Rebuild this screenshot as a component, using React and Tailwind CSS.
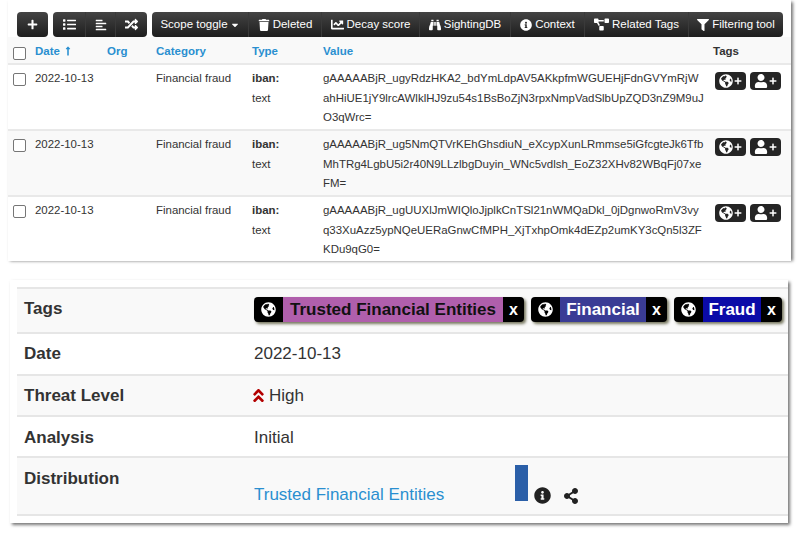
import {
  FaPlus, FaList, FaAlignLeft, FaRandom, FaCaretDown, FaTrash, FaChartLine, FaBinoculars,
  FaInfoCircle, FaProjectDiagram, FaFilter, FaGlobeAmericas, FaUser, FaAngleDoubleUp, FaShareAlt,
  FaLongArrowAltUp,
} from 'react-icons/fa';

const rows = [
  {
    bg: 'bg-white',
    lines: [
      'gAAAAABjR_ugyRdzHKA2_bdYmLdpAV5AKkpfmWGUEHjFdnGVYmRjW',
      'ahHiUE1jY9lrcAWlklHJ9zu54s1BsBoZjN3rpxNmpVadSlbUpZQD3nZ9M9uJ',
      'O3qWrc=',
    ],
  },
  {
    bg: 'bg-[#f9f9f9]',
    lines: [
      'gAAAAABjR_ug5NmQTVrKEhGhsdiuN_eXcypXunLRmmse5iGfcgteJk6Tfb',
      'MhTRg4LgbU5i2r40N9LLzlbgDuyin_WNc5vdlsh_EoZ32XHv82WBqFj07xe',
      'FM=',
    ],
  },
  {
    bg: 'bg-white',
    lines: [
      'gAAAAABjR_ugUUXlJmWIQloJjplkCnTSl21nWMQaDkl_0jDgnwoRmV3vy',
      'q33XuAzz5ypNQeUERaGnwCfMPH_XjTxhpOmk4dEZp2umKY3cQn5l3ZF',
      'KDu9qG0=',
    ],
  },
];

const toolbar = [
  { icon: <FaTrash size={12} />, label: 'Deleted', w: 'w-[73px]' },
  { icon: <FaChartLine size={13} />, label: 'Decay score', w: 'w-[98px]' },
  { icon: <FaBinoculars size={12} />, label: 'SightingDB', w: 'w-[91px]' },
  { icon: <FaInfoCircle size={12} />, label: 'Context', w: 'w-[74px]' },
  { icon: <FaProjectDiagram size={15} />, label: 'Related Tags', w: 'w-[104px]' },
  { icon: <FaFilter size={12} />, label: 'Filtering tool', w: 'flex-1' },
];

function Toolbar() {
  const groupCls = 'flex h-[25px] rounded-[4px] bg-gradient-to-b from-[#444444] to-[#1e1e1e] text-white';
  const btnCls = 'flex items-center justify-center border-l border-[#3a3a3a] first:border-l-0';
  return (
    <div className="flex gap-[5px] pl-[9px] pr-2 pt-3">
      <div className={`${groupCls} w-[31px] items-center justify-center`}>
        <FaPlus size={11} />
      </div>
      <div className={`${groupCls} w-[94px]`}>
        <div className={`${btnCls} w-[32px]`}><FaList size={13} /></div>
        <div className={`${btnCls} w-[30px]`}><FaAlignLeft size={12} /></div>
        <div className={`${btnCls} flex-1`}><FaRandom size={13} /></div>
      </div>
      <div className={`${groupCls} flex-1 text-[11.5px]`}>
        <div className={`${btnCls} w-[96px] gap-[2px]`}>
          Scope toggle
          <FaCaretDown size={10} />
        </div>
        {toolbar.map((b) => (
          <div key={b.label} className={`${btnCls} ${b.w} gap-[3px]`}>
            {b.icon}
            {b.label}
          </div>
        ))}
      </div>
    </div>
  );
}

function TagButton({ icon }) {
  return (
    <div className="flex h-[18px] w-[31px] items-center justify-center gap-px rounded-[4px] bg-[#252525] text-white">
      {icon}
      <FaPlus size={8} />
    </div>
  );
}

function Checkbox() {
  return <span className="ml-[5px] mt-[2px] block h-[13px] w-[13px] rounded-[2px] border border-[#767676] bg-white" />;
}

const gridCls = 'grid grid-cols-[27px_72px_49px_96px_71px_390px_1fr] border-b-2 border-[#e9e9e9]';

function Chip({ label, w, color, textColor }) {
  return (
    <div className="flex h-[25px] rounded-[4px] bg-black text-white shadow-[2px_2px_3px_#77775f]">
      <div className="flex w-[29px] items-center justify-center">
        <FaGlobeAmericas size={15} />
      </div>
      <div className={`flex items-center justify-center pt-px font-bold ${w} ${color} ${textColor}`}>{label}</div>
      <div className="flex w-[21px] items-center justify-center pt-px text-[16px] font-bold">x</div>
    </div>
  );
}

function InfoRow({ label, bg, h, labelCls = '', children, align = 'items-center' }) {
  return (
    <div className={`flex ${h} ${bg} ${align} border-b-2 border-[#e6e6e6]`}>
      <div className={`w-[237px] pl-[7px] font-bold text-[#333333] ${labelCls}`}>{label}</div>
      {children}
    </div>
  );
}

export default function App() {
  return (
    <div className="h-[533px] w-[802px] overflow-hidden bg-white font-['Liberation_Sans',Arial,sans-serif]">
      <div className="ml-2 mr-[11px] h-[259px] bg-white shadow-[2px_2px_3px_#777777]">
        <Toolbar />
        <div className={`${gridCls} h-[28px] bg-[#f9f9f9] text-[11.5px] font-bold leading-[28px] text-[#2a8fd0]`}>
          <div className="pt-[8px]"><Checkbox /></div>
          <div className="flex items-center gap-[3px]">
            Date
            <FaLongArrowAltUp size={10} />
          </div>
          <div>Org</div>
          <div>Category</div>
          <div>Type</div>
          <div>Value</div>
          <div className="text-[#333333]">Tags</div>
        </div>
        {rows.map((r, i) => (
          <div key={i} className={`${gridCls} ${r.bg} pt-[4.25px] pb-[1.25px] text-[11.45px] leading-[19.5px] text-[#333333] last:border-b-0`}>
            <div className="pt-[2px]"><Checkbox /></div>
            <div>2022-10-13</div>
            <div />
            <div>Financial fraud</div>
            <div>
              <div className="font-bold">iban:</div>
              <div>text</div>
            </div>
            <div className="whitespace-nowrap">
              {r.lines.map((l) => <div key={l}>{l}</div>)}
            </div>
            <div className="flex gap-[4px] pl-[2px] pt-[2.5px]">
              <TagButton icon={<FaGlobeAmericas size={14} />} />
              <TagButton icon={<FaUser size={14} />} />
            </div>
          </div>
        ))}
      </div>

      <div className="ml-[10px] mr-[14px] mt-[21px] h-[243px] bg-white pl-[7px] pt-[7px] text-[17px] shadow-[2px_2px_3px_#777777]">
        <div className="border-t-2 border-[#e6e6e6]">
          <InfoRow label="Tags" labelCls="pb-1" bg="bg-[#f9f9f9]" h="h-[45px]">
            <div className="flex gap-[7px] pb-[3px]">
              <Chip label="Trusted Financial Entities" w="w-[220px]" color="bg-[#b05fac]" textColor="text-[#111111]" />
              <Chip label="Financial" w="w-[86px]" color="bg-[#3a3c95]" textColor="text-white" />
              <Chip label="Fraud" w="w-[58px]" color="bg-[#0b0ba8]" textColor="text-white" />
            </div>
          </InfoRow>
          <InfoRow label="Date" bg="bg-white" h="h-[42px]">
            <span className="text-[#333333]">2022-10-13</span>
          </InfoRow>
          <InfoRow label="Threat Level" bg="bg-[#f9f9f9]" h="h-[41px]">
            <span className="flex items-center gap-[2px] text-[#333333]">
              <FaAngleDoubleUp size={17} className="-ml-[4px] text-[#b30000]" />
              High
            </span>
          </InfoRow>
          <InfoRow label="Analysis" bg="bg-white" h="h-[41px] pt-[2px]">
            <span className="text-[#333333]">Initial</span>
          </InfoRow>
          <InfoRow label="Distribution" labelCls="pt-[8px]" bg="bg-[#f9f9f9]" h="h-[58px]" align="items-start">
            <div className="flex h-[46px] items-end pt-[7px]">
              <span className="w-[261px] leading-[18px] text-[#2a8fd0]">Trusted Financial Entities</span>
              <span className="mb-[3px] h-[36px] w-[13px] bg-[#2b5fa8]" />
              <span className="ml-[6px] flex items-center gap-[12px] text-[#222222]">
                <FaInfoCircle size={17} />
                <FaShareAlt size={16} />
              </span>
            </div>
          </InfoRow>
        </div>
      </div>
    </div>
  );
}
